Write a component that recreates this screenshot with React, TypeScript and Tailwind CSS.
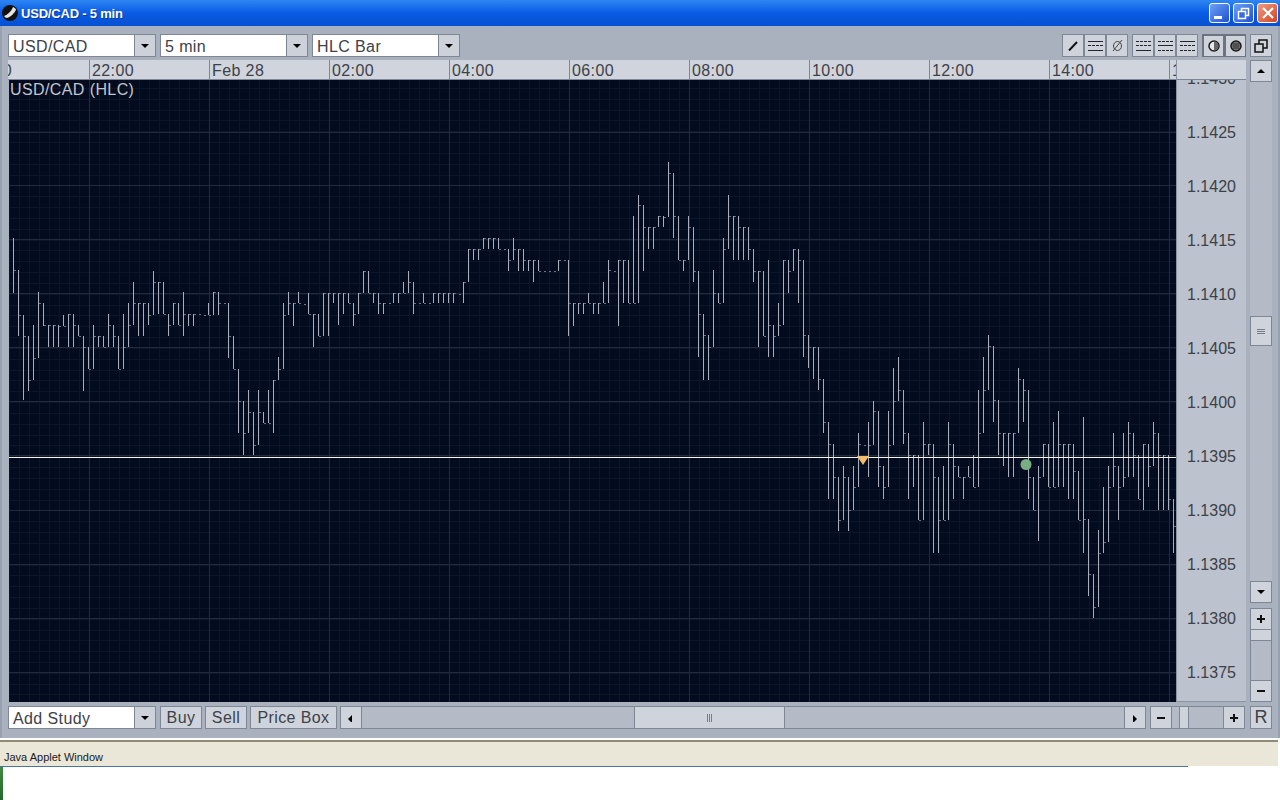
import React from 'react';

const FONT = "font-['Liberation_Sans',Arial,sans-serif]";

// [high, low] in page pixels, one bar every 5px starting at x=13
const bars: [number, number][] = [
  [238, 293], [270, 336], [315, 400], [336, 391], [325, 380], [292, 358], [303, 326], [325, 347], [325, 347], [325, 347],
  [315, 326], [314, 347], [314, 347], [325, 336], [336, 391], [347, 369], [325, 369], [336, 347], [336, 347], [314, 347],
  [325, 347], [336, 369], [314, 369], [303, 347], [282, 325], [303, 336], [303, 336], [303, 325], [271, 315], [282, 314],
  [282, 314], [314, 336], [303, 325], [303, 325], [292, 336], [314, 326], [314, 326], [314, 315], [314, 315], [303, 315],
  [292, 315], [292, 315], [303, 304], [303, 358], [336, 369], [369, 433], [401, 455], [390, 433], [412, 455], [390, 445],
  [412, 423], [390, 423], [380, 433], [357, 380], [303, 369], [292, 315], [303, 326], [292, 303],
  // x=303
  [303, 304], [293, 314], [314, 347], [314, 336], [293, 336], [293, 336], [293, 303], [293, 325], [293, 314], [293, 303],
  [303, 326], [293, 314], [271, 293], [271, 293], [293, 303], [293, 314], [303, 314], [303, 304], [293, 303], [293, 303],
  [282, 293], [271, 293], [282, 314], [303, 304], [293, 303], [303, 304], [293, 303], [293, 303], [293, 303], [293, 303],
  [293, 303], [293, 294], [282, 303], [249, 282], [249, 260], [249, 260], [238, 249], [238, 249], [238, 249], [238, 249],
  [249, 250], [249, 271], [238, 260], [249, 271], [249, 271], [260, 271], [260, 282], [260, 271], [271, 272], [271, 272],
  [271, 272], [260, 271], [260, 261], [260, 336], [303, 326], [303, 314], [303, 314], [293, 303], [303, 314], [303, 314],
  // x=603
  [282, 303], [260, 303], [270, 271], [260, 326], [260, 303], [260, 303], [216, 303], [195, 303], [205, 271], [227, 249],
  [227, 249], [216, 227], [216, 227], [162, 217], [173, 238], [216, 260], [260, 271], [216, 260], [227, 282], [271, 357],
  [314, 380], [335, 380], [270, 347], [293, 303], [238, 303], [195, 249], [216, 260], [216, 260], [227, 260], [227, 260],
  [249, 282], [271, 347], [271, 336], [260, 357], [325, 357], [303, 336], [260, 325], [260, 293], [249, 271], [249, 303],
  [260, 357], [335, 368], [347, 379], [347, 390], [379, 433],
  // x=828
  [422, 499], [444, 499], [477, 531], [466, 520], [477, 531], [466, 510], [433, 487], [444, 445], [422, 477], [401, 445],
  [411, 487], [466, 499], [411, 487], [368, 445], [357, 401], [390, 444], [433, 499], [455, 487], [455, 520], [422, 520],
  [444, 455], [444, 553], [477, 553], [466, 520], [422, 520], [444, 499], [466, 477], [477, 499], [466, 477], [455, 487],
  [390, 487], [357, 433], [335, 390], [346, 422], [400, 455], [433, 466], [433, 477], [433, 477], [368, 433], [379, 422],
  [390, 499], [477, 510], [466, 541], [444, 477], [444, 487], [422, 487], [411, 487], [444, 487], [444, 499], [444, 499],
  [471, 520], [417, 553], [519, 596], [574, 618], [530, 607], [487, 553], [466, 542], [433, 487], [466, 520], [433, 487],
  [422, 477], [433, 477], [455, 499], [444, 510], [444, 487], [422, 466], [433, 510], [455, 510], [455, 510], [499, 553],
];

const priceLabels = ['1.1430', '1.1425', '1.1420', '1.1415', '1.1410', '1.1405', '1.1400', '1.1395', '1.1390', '1.1385', '1.1380', '1.1375'];
const timeLabels = ['22:00', 'Feb 28', '02:00', '04:00', '06:00', '08:00', '10:00', '12:00', '14:00'];

const majorY = [132, 185, 239, 293, 347, 401, 455, 510, 564, 618, 672];
const minorY = Array.from({ length: 58 }, (_, i) => Math.round(88 + i * 10.83));
const minorX = Array.from({ length: 117 }, (_, i) => 9 + i * 10);
const majorX = [89, 209, 329, 449, 569, 689, 809, 929, 1049, 1169];

const closeOf = (i: number) => {
  const [h, l] = bars[i];
  const next = bars[i + 1];
  if (!next) return Math.round((h + l) / 2);
  if (next[0] >= h && next[0] <= l) return next[0];
  if (next[1] >= h && next[1] <= l) return next[1];
  return h > next[1] ? h : l;
};

const Chart = () => (
  <svg className="block w-[1167px] h-[622px]" viewBox="9 80 1167 622" shapeRendering="crispEdges">
    <rect x="9" y="80" width="1167" height="622" fill="#030b1f" />
    {minorX.map((x) => (
      <line key={x} x1={x + 0.5} x2={x + 0.5} y1="80" y2="702" stroke="#0d1529" />
    ))}
    {minorY.map((y) => (
      <line key={y} x1="9" x2="1176" y1={y + 0.5} y2={y + 0.5} stroke="#0d1529" />
    ))}
    {majorX.map((x) => (
      <line key={x} x1={x + 0.5} x2={x + 0.5} y1="80" y2="702" stroke="#222b3d" />
    ))}
    {majorY.map((y) => (
      <line key={y} x1="9" x2="1176" y1={y + 0.5} y2={y + 0.5} stroke="#222b3d" />
    ))}
    {bars.map(([h, l], i) => {
      const x = 13 + i * 5;
      const c = closeOf(i);
      return (
        <g key={i}>
          {l - h > 1 && <line x1={x + 0.5} x2={x + 0.5} y1={h} y2={l} stroke="#a9aeba" />}
          <line x1={x + 1} x2={x + 3} y1={c + 0.5} y2={c + 0.5} stroke="#6b7180" />
        </g>
      );
    })}
    <line x1="9" x2="1176" y1="457.5" y2="457.5" stroke="#f8f6ea" />
    <polygon points="857,456 869,456 863,465" fill="#f2bd68" shapeRendering="auto" />
    <circle cx="1026" cy="464.5" r="5.5" fill="#79ad84" shapeRendering="auto" />
  </svg>
);

const Arrow = ({ dir }: { dir: 'up' | 'down' | 'left' | 'right' }) => {
  const pts = {
    up: '0,5 8,5 4,1',
    down: '0,1 8,1 4,5',
    left: '5,0 5,8 1,4',
    right: '2,0 2,8 6,4',
  }[dir];
  return (
    <svg width="8" height="8" viewBox="0 0 8 6" className={dir === 'left' || dir === 'right' ? '' : 'h-[6px]'}>
      <polygon points={pts} fill="#000" />
    </svg>
  );
};

const Combo = ({ label }: { label: string }) => (
  <div className="flex w-[148px] h-[23px] border border-[#7f8794] bg-white">
    <div className="flex-1 pl-[4px] pt-[1px] text-[16px] leading-[21px] tracking-[0.4px] text-[#3d4148]">{label}</div>
    <div className="flex w-[21px] items-center justify-center border-l border-[#7f8794] bg-[#cdd2da]">
      <Arrow dir="down" />
    </div>
  </div>
);

const Btn = ({ className, children }: { className: string; children?: React.ReactNode }) => (
  <div className={`flex shrink-0 items-center justify-center border border-[#7f8794] bg-[#cfd4dc] text-[16px] tracking-[0.4px] text-[#3d4148] ${className}`}>
    {children}
  </div>
);

const Grip = ({ vertical }: { vertical?: boolean }) =>
  vertical ? (
    <div className="flex gap-[1px]">
      <div className="h-[8px] w-[1px] bg-[#777e8a]" />
      <div className="h-[8px] w-[1px] bg-[#777e8a]" />
      <div className="h-[8px] w-[1px] bg-[#777e8a]" />
    </div>
  ) : (
    <div className="flex flex-col gap-[1px]">
      <div className="h-[1px] w-[8px] bg-[#777e8a]" />
      <div className="h-[1px] w-[8px] bg-[#777e8a]" />
      <div className="h-[1px] w-[8px] bg-[#777e8a]" />
    </div>
  );

const Minus = () => <div className="h-[2px] w-[8px] bg-[#111]" />;

const Plus = () => (
  <svg width="8" height="8" viewBox="0 0 8 8">
    <path d="M3 0h2v3h3v2H5v3H3V5H0V3h3z" fill="#111" />
  </svg>
);

// lines used by the drawing tool buttons: solid ones and dotted ones
const LinesIcon = ({ rows }: { rows: [number, boolean][] }) => (
  <svg width="15" height="12" viewBox="0 0 15 12" shapeRendering="crispEdges">
    {rows.map(([y, dashed]) => (
      <line key={y} x1="0" x2="15" y1={y + 0.5} y2={y + 0.5} stroke="#22252b" strokeDasharray={dashed ? '3 1' : undefined} />
    ))}
  </svg>
);

const Shade = ({ dense }: { dense?: boolean }) => (
  <svg width="12" height="12" viewBox="0 0 12 12">
    <circle cx="6" cy="6" r="5" fill={dense ? '#777' : '#e6e8ec'} stroke="#1a1a1a" strokeWidth="1.5" />
    {dense ? (
      <path d="M3 4h6M2.5 6h7M3 8h6" stroke="#2a2a2a" strokeWidth="1" />
    ) : (
      <path d="M6 1.5a4.5 4.5 0 0 1 0 9z" fill="#666" />
    )}
  </svg>
);

const ToolBtn = ({ dark, children }: { dark?: boolean; children: React.ReactNode }) => (
  <div className={`flex h-[23px] w-[22px] shrink-0 items-center justify-center bg-[#cfd4dc] ${dark ? 'border-2 border-b border-r border-[#6d7480]' : 'border border-[#7f8794]'}`}>
    {children}
  </div>
);

const CaptionBtn = ({ className, children }: { className: string; children: React.ReactNode }) => (
  <div className={`flex h-[20px] w-[21px] items-center justify-center rounded-[3px] border border-white ${className}`}>{children}</div>
);

export default function App() {
  return (
    <div className={`flex h-[800px] w-[1280px] flex-col overflow-hidden bg-white ${FONT}`}>
      {/* title bar */}
      <div className="flex h-[26px] shrink-0 items-center justify-between bg-gradient-to-b from-[#2d86f2] via-[#0a5be4] to-[#0650d2] pl-[2px] pr-[2px]">
        <div className="flex items-center gap-[3px]">
          <svg width="16" height="16" viewBox="0 0 16 16">
            <circle cx="8" cy="8" r="8" fill="#111" />
            <path d="M2 11C5 10 9 7 11 2c2 1 3 2 3 3-2 4-6 7-9 8-1 0-2-1-3-2z" fill="#e4e4e4" />
          </svg>
          <span className="text-[13px] font-bold leading-none tracking-[-0.2px] text-white [text-shadow:1px_1px_0_#0a3a9a]">USD/CAD - 5 min</span>
        </div>
        <div className="flex items-center gap-[3px]">
          <CaptionBtn className="bg-gradient-to-br from-[#6f9ff5] to-[#1f50d0] items-end pb-[3px] justify-start pl-[4px]">
            <div className="h-[3px] w-[8px] bg-white" />
          </CaptionBtn>
          <CaptionBtn className="bg-gradient-to-br from-[#6f9ff5] to-[#1f50d0]">
            <svg width="13" height="13" viewBox="0 0 13 13" fill="none" stroke="#fff" strokeWidth="1.5">
              <rect x="4.5" y="1.5" width="7" height="7" />
              <rect x="1.5" y="4.5" width="7" height="7" fill="#3a6be0" />
            </svg>
          </CaptionBtn>
          <CaptionBtn className="bg-gradient-to-br from-[#f09a80] to-[#d2401c]">
            <svg width="12" height="12" viewBox="0 0 12 12" stroke="#fff" strokeWidth="2.2">
              <path d="M1 1l10 10M11 1L1 11" />
            </svg>
          </CaptionBtn>
        </div>
      </div>

      {/* window body */}
      <div className="flex h-[712px] shrink-0 flex-col border-l-2 border-r-2 border-[#98a1af] bg-[#a9b1be] pl-[6px] pr-[6px] pt-[8px]">
        <div className="flex h-[23px] shrink-0 items-center">
          <div className="flex gap-[4px]">
            <Combo label="USD/CAD" />
            <Combo label="5 min" />
            <Combo label="HLC Bar" />
          </div>
          <div className="ml-auto flex gap-[4px]">
            <div className="flex">
              <ToolBtn>
                <svg width="10" height="10" viewBox="0 0 10 10">
                  <path d="M1 9.5L9 1" stroke="#111" strokeWidth="2" />
                </svg>
              </ToolBtn>
              <ToolBtn>
                <LinesIcon rows={[[1, false], [5, true], [10, false]]} />
              </ToolBtn>
              <ToolBtn>
                <svg width="13" height="13" viewBox="0 0 13 13" fill="none" stroke="#444" strokeWidth="1">
                  <ellipse cx="6.5" cy="7" rx="4" ry="4.5" />
                  <path d="M2 12L11 1" />
                </svg>
              </ToolBtn>
            </div>
            <div className="flex">
              <ToolBtn>
                <LinesIcon rows={[[1, true], [5, true], [10, false]]} />
              </ToolBtn>
              <ToolBtn>
                <LinesIcon rows={[[1, true], [5, false], [10, true]]} />
              </ToolBtn>
              <ToolBtn>
                <LinesIcon rows={[[1, false], [5, true], [10, true]]} />
              </ToolBtn>
            </div>
            <div className="flex">
              <ToolBtn dark>
                <Shade />
              </ToolBtn>
              <ToolBtn dark>
                <Shade dense />
              </ToolBtn>
            </div>
            <ToolBtn>
              <svg width="14" height="14" viewBox="0 0 14 14" fill="#cfd4dc" stroke="#111" strokeWidth="1.5">
                <rect x="5" y="1" width="8" height="8" />
                <rect x="1" y="5" width="8" height="8" />
              </svg>
            </ToolBtn>
          </div>
        </div>

        {/* chart row */}
        <div className="mt-[3px] flex h-[643px] shrink-0">
          <div className="flex w-[1168px] shrink-0 flex-col">
            <div className="flex h-[20px] shrink-0 overflow-hidden border-b border-[#7f8794] bg-[#d0d4dc] text-[16px] leading-[21px] tracking-[0.4px] text-[#3d4148]">
              <div className="w-[81px] shrink-0 overflow-hidden">
                <div className="ml-[-38px]">20:00</div>
              </div>
              {timeLabels.map((t) => (
                <div key={t} className="w-[120px] shrink-0 border-l border-[#7f8794] pl-[2px]">
                  {t}
                </div>
              ))}
              <div className="w-[7px] shrink-0 overflow-hidden border-l border-[#7f8794] pl-[2px]">16:00</div>
            </div>
            <div className="relative ml-[1px] h-[622px] w-[1167px]">
              <Chart />
              <div className="absolute left-[1px] top-[1px] text-[16px] leading-[18px] tracking-[0.4px] text-[#c2c6ce]">USD/CAD (HLC)</div>
            </div>
          </div>

          <div className="flex h-[642px] w-[70px] shrink-0 flex-col overflow-hidden border-l border-b border-[#8b94a3] bg-[#bcc2ce]">
            <div className="relative z-10 h-[20px] shrink-0 border-b border-[#7f8794] bg-[#d0d4dc]" />
            <div className="-mt-[28px] shrink-0">
              {priceLabels.map((p) => (
                <div key={p} className="flex h-[54px] items-center pl-[10px] text-[16px] text-[#3d4148]">
                  {p}
                </div>
              ))}
            </div>
          </div>

          <div className="ml-[4px] flex h-[642px] w-[22px] shrink-0 flex-col bg-[#a9b1be]">
            <Btn className="h-[22px] w-[22px]">
              <Arrow dir="up" />
            </Btn>
            <div className="relative h-[499px] shrink-0 bg-[#b4bac6]">
              <Btn className="absolute left-0 top-[234px] h-[30px] w-[22px]">
                <Grip />
              </Btn>
            </div>
            <Btn className="h-[22px] w-[22px]">
              <Arrow dir="down" />
            </Btn>
            <div className="h-[5px] shrink-0" />
            <Btn className="h-[22px] w-[22px]">
              <Plus />
            </Btn>
            <div className="h-[11px] shrink-0 border-x border-b border-[#7f8794] bg-[#cfd4dc]" />
            <div className="h-[39px] shrink-0 border-x border-[#7f8794] bg-[#b4bac6]" />
            <Btn className="h-[22px] w-[22px]">
              <Minus />
            </Btn>
          </div>
        </div>

        {/* bottom bar */}
        <div className="mt-[3px] flex h-[23px] shrink-0 items-stretch">
          <Combo label="Add Study" />
          <Btn className="ml-[4px] w-[42px] pt-[1px]">Buy</Btn>
          <Btn className="ml-[3px] w-[42px] pt-[1px]">Sell</Btn>
          <Btn className="ml-[3px] w-[87px] pt-[1px]">Price Box</Btn>
          <Btn className="ml-[3px] w-[22px]">
            <Arrow dir="left" />
          </Btn>
          <div className="relative w-[762px] shrink-0 border-y border-[#7f8794] bg-[#b4bac6]">
            <Btn className="absolute left-[272px] -top-[1px] h-[23px] w-[151px]">
              <Grip vertical />
            </Btn>
          </div>
          <Btn className="w-[22px]">
            <Arrow dir="right" />
          </Btn>
          <Btn className="ml-[4px] w-[22px]">
            <Minus />
          </Btn>
          <div className="flex w-[51px] shrink-0 border-y border-[#7f8794] bg-[#b4bac6]">
            <div className="w-[7px]" />
            <div className="w-[10px] border-x border-[#7f8794] bg-[#cfd4dc]" />
          </div>
          <Btn className="w-[22px]">
            <Plus />
          </Btn>
          <Btn className="ml-[5px] w-[22px] text-[18px] tracking-normal">R</Btn>
        </div>
      </div>

      {/* browser status strip */}
      <div className="mt-[2px] flex h-[26px] w-[1278px] shrink-0 items-end border-t-2 border-[#8f8b76] bg-[#ebe7d8] pl-[4px] pb-[1px] text-[11px] leading-[16px] text-[#1a1a1a]">
        Java Applet Window
      </div>
      <div className="relative flex-1 bg-white">
        <div className="h-[1px] w-[1188px] bg-[#4a73a8]" />
        <div className="h-full w-[3px] bg-gradient-to-b from-[#3f8a3f] to-[#1f6a2a]" />
      </div>
    </div>
  );
}
